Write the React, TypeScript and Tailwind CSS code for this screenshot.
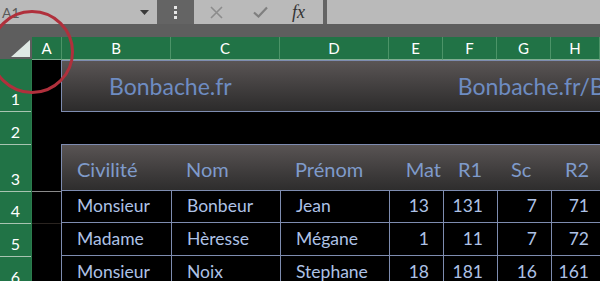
import React from "react";

const cols = [
  { l: "A", w: 30 },
  { l: "B", w: 109 },
  { l: "C", w: 109 },
  { l: "D", w: 109 },
  { l: "E", w: 54 },
  { l: "F", w: 54 },
  { l: "G", w: 54 },
  { l: "H", w: 49 },
];

const rows = [
  ["Monsieur", "Bonbeur", "Jean", "13", "131", "7", "71"],
  ["Madame", "Hèresse", "Mégane", "1", "11", "7", "72"],
  ["Monsieur", "Noix", "Stephane", "18", "181", "16", "161"],
];
const rowH = [32, 33, 33];
const widths = [110, 109, 109, 54, 54, 54, 49];

export default function App() {
  const font = { fontFamily: "Lato, 'Open Sans', sans-serif" };
  return (
    <div className="relative w-[600px] h-[281px] overflow-hidden bg-black" style={font}>
      {/* formula bar */}
      <div className="flex h-[24px] bg-[#646464]">
        <div className="w-[157px] shrink-0 bg-[#bababa] flex items-center pl-[2px] pr-[8px] justify-between">
          <span className="text-[14px] text-[#5a5a5a]">A1</span>
          <svg width="9" height="5" viewBox="0 0 9 5"><path d="M0 0h9L4.5 5z" fill="#3a3a3a" /></svg>
        </div>
        <div className="w-[37px] shrink-0 flex flex-col items-center justify-center gap-[2px]">
          <div className="w-[3px] h-[3px] bg-[#e6e6e6]" />
          <div className="w-[3px] h-[3px] bg-[#e6e6e6]" />
          <div className="w-[3px] h-[3px] bg-[#e6e6e6]" />
        </div>
        <div className="w-[129px] shrink-0 bg-[#bababa] flex items-center">
          <svg className="ml-[16px]" width="13" height="13" viewBox="0 0 13 13"><path d="M1 1L12 12M12 1L1 12" stroke="#8c8c8c" strokeWidth="1.6" /></svg>
          <svg className="ml-[30px]" width="15" height="12" viewBox="0 0 15 12"><path d="M1 6.5L5.5 10.5L14 1.5" stroke="#7f7f7f" strokeWidth="2.2" fill="none" /></svg>
          <span className="ml-[24px] text-[18px] italic text-[#333]" style={{ fontFamily: "'Liberation Serif', serif" }}>fx</span>
        </div>
        <div className="w-[4px] shrink-0" />
        <div className="flex-1 bg-[#bababa]" />
      </div>
      <div className="h-[13px] bg-[#5e5e5e]" />
      {/* column headers */}
      <div className="flex h-[23px]">
        <div className="w-[32px] shrink-0 bg-[#5e5e5e] relative border-b border-[#217346]">
          <svg className="absolute right-[2px] bottom-[2px]" width="19" height="17" viewBox="0 0 19 17"><path d="M19 0V17H0z" fill="#dfe9e4" /></svg>
        </div>
        {cols.map((c) => (
          <div
            key={c.l}
            style={{ width: c.w }}
            className="shrink-0 bg-[#217346] text-white text-[15px] flex items-center justify-center border-r border-[#4c9468] border-b border-b-[#7fae90]"
          >
            {c.l}
          </div>
        ))}
      </div>
      {/* body */}
      <div className="flex">
        <div className="w-[32px] shrink-0 flex flex-col bg-[#217346] text-white text-[16px] border-r border-[#2b7a4c]">
          {[
            ["1", 52],
            ["2", 33],
            ["3", 47],
            ["4", 32],
            ["5", 33],
            ["6", 33],
          ].map(([n, h]) => (
            <div key={n} style={{ height: h as number }} className="shrink-0 flex items-end justify-center border-b border-[#a9c4b2] leading-none">
              <span className="pb-[4px]">{n}</span>
            </div>
          ))}
        </div>
        <div className="w-[29px] shrink-0 flex flex-col">
          <div className="h-[132px] bg-black border-b border-[#8a8a8a]" />
          <div className="h-[32px] bg-black border-b border-[#2a2420]" />
          <div className="flex-1 bg-black" />
        </div>
        <div className="flex-1 min-w-0 flex flex-col">
          <div className="h-[52px] border border-[#7e8cb0] border-r-0 flex items-center bg-gradient-to-b from-[#5a5555] to-[#2c2b2b] text-[#6e8cc2] text-[23px] whitespace-nowrap overflow-hidden">
            <span className="ml-[47px] shrink-0">Bonbache.fr</span>
            <span className="ml-[226px] shrink-0">Bonbache.fr/Bonbache</span>
          </div>
          <div className="h-[32px]" />
          <div className="h-[47px] border border-[#7e8cb0] border-r-0 flex items-center bg-gradient-to-b from-[#595454] to-[#2e2d2d] text-[#7f9bcb] text-[20px] whitespace-nowrap pt-[2px]">
            <span className="w-[110px] shrink-0 pl-[15px]">Civilité</span>
            <span className="w-[109px] shrink-0 pl-[14px]">Nom</span>
            <span className="w-[109px] shrink-0 pl-[14px]">Prénom</span>
            <span className="w-[51px] shrink-0 text-right">Mat</span>
            <span className="w-[54px] shrink-0 pl-[17px]">R1</span>
            <span className="w-[54px] shrink-0 pl-[16px]">Sc</span>
            <span className="w-[56px] shrink-0 pl-[16px]">R2</span>
          </div>
          {rows.map((r, i) => (
            <div key={i} style={{ height: rowH[i] }} className="shrink-0 flex border-b border-[#7e8cb0] text-[#aec2e6] text-[17.5px] whitespace-nowrap">
              {r.map((v, j) => (
                <div
                  key={j}
                  style={{ width: widths[j] }}
                  className={
                    "shrink-0 flex items-center border-l border-[#7e8cb0] " +
                    (j < 3 ? "pl-[15px]" : j === 6 ? "justify-end pr-[11px]" : "justify-end pr-[14px]")
                  }
                >
                  {v}
                </div>
              ))}
            </div>
          ))}
        </div>
      </div>
      {/* red circle annotation */}
      <div className="absolute left-[-10px] top-[10px] w-[84px] h-[84px] rounded-full border-[3px] border-[#b0303c]" />
    </div>
  );
}
